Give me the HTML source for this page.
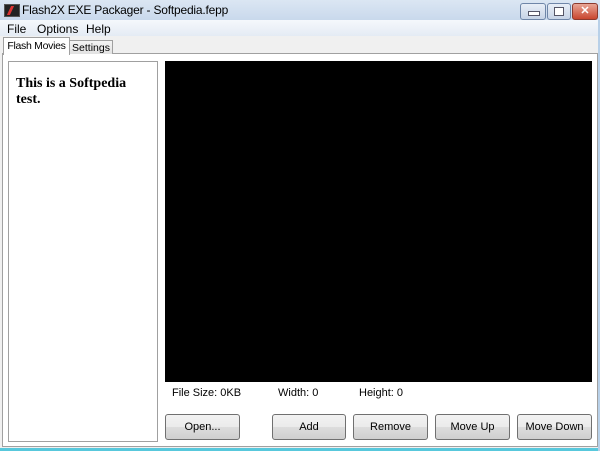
<!DOCTYPE html><html><head><style>
body{margin:0;width:600px;height:451px;overflow:hidden;background:#f0f0f0;font-family:"Liberation Sans",sans-serif;font-size:11px;position:relative;color:#000}
.a{position:absolute}
.btn{position:absolute;top:414px;height:24px;border:1px solid #707070;border-radius:3px;background:linear-gradient(#f2f2f2,#ebebeb 50%,#dddddd 51%,#cfcfcf);text-align:center;line-height:24px;font-size:11px}
.wb{position:absolute;top:3px;height:15px;border:1px solid #6f86a8;border-radius:3px;background:linear-gradient(#e8eef7,#c7d4e6)}
</style></head><body>
<div class="a" style="left:0;top:0;width:600px;height:20px;background:linear-gradient(#dbe6f3,#c9d9ec)"></div>
<div class="a" style="left:4px;top:4px;width:14px;height:11px;background:#222;border:1px solid #555"><div class="a" style="left:4px;top:1px;width:3px;height:9px;background:#d33;transform:skewX(-25deg)"></div></div>
<div class="a" style="left:22px;top:3px;font-size:12px;letter-spacing:-0.2px">Flash2X EXE Packager - Softpedia.fepp</div>
<div class="wb" style="left:520px;width:24px"><div class="a" style="left:7px;top:7px;width:10px;height:3px;background:#fff;border:1px solid #556"></div></div>
<div class="wb" style="left:547px;width:22px"><div class="a" style="left:6px;top:3px;width:8px;height:7px;border:1px solid #556;background:#fff"></div></div>
<div class="wb" style="left:572px;width:24px;background:linear-gradient(#e8a595,#c9462f);border-color:#8b3a2e;color:#fff;font-weight:bold;text-align:center;line-height:15px;font-size:11px">✕</div>
<div class="a" style="left:0;top:20px;width:600px;height:16px;background:linear-gradient(#f5f8fc,#e4ebf4)"></div>
<div class="a" style="left:7px;top:22px;font-size:12px">File</div>
<div class="a" style="left:37px;top:22px;font-size:12px">Options</div>
<div class="a" style="left:86px;top:22px;font-size:12px">Help</div>
<div class="a" style="left:2px;top:53px;width:594px;height:392px;background:#fff;border:1px solid #a0a0a0"></div>
<div class="a" style="left:3px;top:37px;width:65px;height:17px;background:#fff;border:1px solid #a0a0a0;border-bottom:none;font-size:10.5px;line-height:17px;text-align:center;letter-spacing:-0.3px">Flash Movies</div>
<div class="a" style="left:69px;top:40px;width:42px;height:13px;background:linear-gradient(#f4f4f4,#e2e2e2);border:1px solid #a0a0a0;border-bottom:none;line-height:15px;text-align:center;font-size:10.5px">Settings</div>
<div class="a" style="left:8px;top:61px;width:148px;height:379px;border:1px solid #a0a0a0;background:#fff"></div>
<div class="a" style="left:16px;top:76px;font-family:'Liberation Serif',serif;font-weight:bold;font-size:14px;line-height:16px;width:125px">This is a Softpedia test.</div>
<div class="a" style="left:165px;top:61px;width:427px;height:321px;background:#000"></div>
<div class="a" style="left:172px;top:387px">File Size: 0KB</div>
<div class="a" style="left:278px;top:387px">Width: 0</div>
<div class="a" style="left:359px;top:387px">Height: 0</div>
<div class="btn" style="left:165px;width:73px">Open...</div>
<div class="btn" style="left:272px;width:72px">Add</div>
<div class="btn" style="left:353px;width:73px">Remove</div>
<div class="btn" style="left:435px;width:73px">Move Up</div>
<div class="btn" style="left:517px;width:73px">Move Down</div>
<div class="a" style="left:0;top:448px;width:600px;height:3px;background:#58c8dc"></div>
<div class="a" style="left:598px;top:20px;width:2px;height:431px;background:#b8d0e8"></div>
</body></html>
